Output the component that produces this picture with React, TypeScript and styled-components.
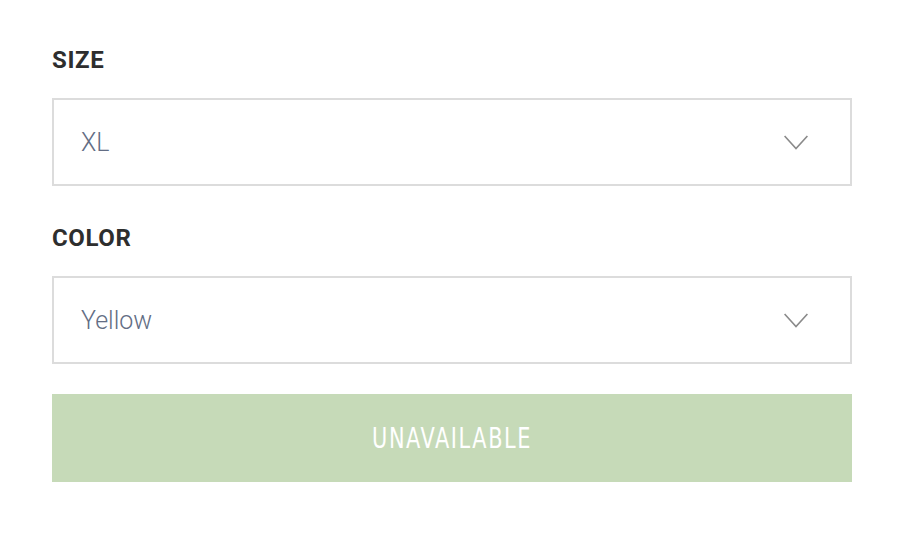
import React from "react";
import styled, {createGlobalStyle} from "styled-components";


const GlobalStyle = createGlobalStyle`
    body {
        margin: 0;
        background: #fff;
        font-family: Roboto, "Liberation Sans", sans-serif;
    }
`;

const Form = styled.div`
    width: 800px;
    padding: 45px 0 0 52px;
    display: flex;
    flex-direction: column;
`;

const Field = styled.div<{gap: number}>`
    display: flex;
    flex-direction: column;
    margin-bottom: ${p => p.gap}px;
`;

const Label = styled.label`
    font-family: Roboto, "Liberation Sans", sans-serif;
    font-weight: 700;
    font-size: 24px;
    line-height: 30px;
    letter-spacing: 0.6px;
    color: #2e2e2e;
    text-transform: uppercase;
    margin-bottom: 23px;
`;

const SelectBox = styled.div`
    box-sizing: border-box;
    height: 88px;
    border: 2px solid #dcdcdc;
    display: flex;
    align-items: center;
    justify-content: space-between;
    padding: 0 42px 0 27px;
    cursor: pointer;
`;

const SelectValue = styled.span`
    font-family: Roboto, "Liberation Sans", sans-serif;
    font-weight: 300;
    font-size: 25px;
    color: #636d84;
`;

const Chevron = styled.svg`
    width: 24px;
    height: 15px;
    display: block;
`;

const Button = styled.button`
    height: 88px;
    border: none;
    padding: 0;
    background: #c6dab8;
    display: flex;
    align-items: center;
    justify-content: center;
    cursor: not-allowed;
`;

const ButtonText = styled.span`
    display: inline-block;
    color: #fff;
    font-family: "DejaVu Sans Condensed", "Liberation Sans Narrow", sans-serif;
    font-size: 29px;
    letter-spacing: 2px;
    text-transform: uppercase;
    transform: scaleX(0.8);
`;


interface ISelect {
    label: string
    value: string
    gap: number
}

function Select({label, value, gap}: ISelect) {
    return (
        <Field gap={gap}>
            <Label>{label}</Label>
            <SelectBox>
                <SelectValue>{value}</SelectValue>
                <Chevron viewBox="0 0 24 15">
                    <path d="M0.6 1 L12 13.6 L23.4 1" fill="none" stroke="#8a8a8a" strokeWidth="1.6"/>
                </Chevron>
            </SelectBox>
        </Field>
    );
}


export default function App() {
    return (
        <>
            <GlobalStyle/>
            <Form>
                <Select label="Size" value="XL" gap={37}/>
                <Select label="Color" value="Yellow" gap={30}/>
                <Button disabled>
                    <ButtonText>Unavailable</ButtonText>
                </Button>
            </Form>
        </>
    );
}
